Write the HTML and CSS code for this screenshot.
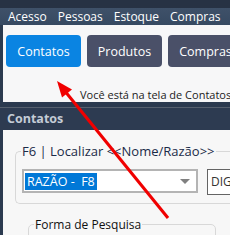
FILE: index.html
```html
<!DOCTYPE html>
<html>
<head>
<meta charset="utf-8">
<link rel="stylesheet" href="styles.css">
</head>
<body>
<div class="topstrip"></div>
<nav class="menubar">
  <span class="menu-item">Acesso</span>
  <span class="menu-item">Pessoas</span>
  <span class="menu-item">Estoque</span>
  <span class="menu-item">Compras</span>
</nav>
<section class="panel">
  <div class="buttons">
    <button class="btn btn-active">Contatos</button>
    <button class="btn">Produtos</button>
    <button class="btn">Compras</button>
  </div>
  <div class="message">Você está na tela de Contatos</div>
</section>
<div class="separator"></div>
<div class="titlebar">Contatos</div>
<section class="form">
  <fieldset class="group">
    <legend class="group-label">F6 | Localizar &lt;&lt;Nome/Razão&gt;&gt;</legend>
    <div class="search-row">
      <div class="combo">
        <span class="combo-text">RAZÃO -&nbsp; F8</span>
        <span class="combo-arrow"></span>
      </div>
      <div class="text-input">DIG</div>
    </div>
  </fieldset>
  <fieldset class="group group-sub">
    <legend class="group-label sub-label">Forma de Pesquisa</legend>
  </fieldset>
</section>
<svg class="arrow" width="230" height="235" viewBox="0 0 230 235">
  <line x1="168" y1="218" x2="64" y2="90" stroke="#f00000" stroke-width="3"/>
  <polygon points="57,81 72,89.5 62,97.5" fill="#f00000"/>
</svg>
</body>
</html>
```
FILE: styles.css
```css
* { box-sizing: border-box; }
html, body { margin: 0; padding: 0; }
body {
  width: 230px;
  height: 235px;
  overflow: hidden;
  background: #2b3a4f;
  font-family: "Open Sans", "Noto Sans", sans-serif;
  position: relative;
}
.topstrip { height: 8px; background: #273244; }
.menubar {
  height: 17px;
  background: linear-gradient(#3f5169, #364961);
  display: flex;
  align-items: center;
  padding-left: 8px;
  gap: 11px;
  color: #ffffff;
  font-size: 12px;
  white-space: nowrap;
  overflow: hidden;
}
.panel {
  margin-left: 3px;
  height: 77px;
  background: #f7f7f8;
  padding: 10px 0 1px 3px;
  overflow: hidden;
  display: flex;
  flex-direction: column;
}
.buttons { display: flex; gap: 6px; }
.btn {
  flex: none;
  width: 75px;
  height: 32px;
  border: none;
  border-radius: 4px;
  background: #4a5068;
  color: #ffffff;
  font-family: inherit;
  font-size: 12.5px;
  padding: 0;
  white-space: nowrap;
}
.btn-active { background: #0a84e2; }
.message {
  margin: auto 0 0 74px;
  font-size: 11px;
  line-height: 13px;
  color: #1c1c1c;
  white-space: nowrap;
}
.separator {
  height: 6px;
  background: #2b3a4f;
  border-bottom: 1px solid #56606e;
}
.titlebar {
  height: 22px;
  background: #2d3b51;
  color: #c4ccd6;
  font-weight: bold;
  font-size: 12.5px;
  padding-left: 7px;
  line-height: 21px;
}
.form {
  margin-left: 3px;
  height: 105px;
  background: #f7f7f7;
  padding-top: 12px;
  overflow: hidden;
}
.group {
  margin: 0 0 0 12px;
  width: 215px;
  height: 62px;
  border: 1px solid #d8d8d8;
  border-right: none;
  border-radius: 5px 0 0 5px;
  padding: 9px 0 0 6px;
  overflow: hidden;
}
.group-label {
  padding: 0 1px;
  margin-left: -1px;
  font-size: 13px;
  color: #1b2b48;
  white-space: nowrap;
}
.search-row { display: flex; gap: 9px; align-items: flex-start; }
.combo {
  flex: none;
  width: 176px;
  height: 24px;
  border: 2px solid #b4b4b4;
  background: #ffffff;
  display: flex;
  align-items: center;
  justify-content: space-between;
  padding: 0 6px 0 1px;
}
.combo-text {
  background: #0078d7;
  color: #ffffff;
  font-size: 12.5px;
  line-height: 17px;
  padding: 0 2px;
  white-space: nowrap;
}
.combo-arrow {
  width: 0; height: 0;
  border-left: 5px solid transparent;
  border-right: 5px solid transparent;
  border-top: 5px solid #808080;
}
.text-input {
  flex: none;
  width: 40px;
  height: 26px;
  border: 1px solid #646464;
  border-right: none;
  background: #ffffff;
  font-size: 12px;
  line-height: 24px;
  padding-left: 3px;
  color: #333;
  overflow: hidden;
}
.group-sub {
  margin: 12px 0 0 25px;
  width: 188px;
  height: 40px;
  padding: 0;
  border-right: 1px solid #d8d8d8;
  border-radius: 5px;
}
.sub-label { margin-left: 5px; font-size: 12px; color: #111; padding: 0 1px; }
.arrow { position: absolute; left: 0; top: 0; pointer-events: none; }
```
